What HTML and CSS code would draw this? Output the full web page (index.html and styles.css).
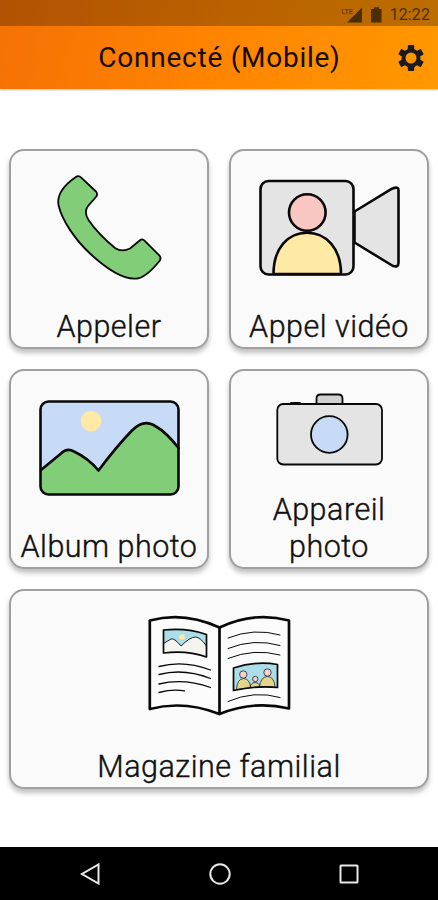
FILE: index.html
```html
<!DOCTYPE html>
<html lang="fr">
<head>
<meta charset="utf-8">
<title>Connecté (Mobile)</title>
<link rel="stylesheet" href="styles.css">
</head>
<body>
<div class="phone">
  <header class="header">
    <div class="status">
      <svg class="status-icons" viewBox="340 4 46 20"><text class="lte" x="341.5" y="13">LTE</text><path d="M347 21.5 362 6.500V21.500Z"/><path d="M374 6.200h5v1.800h2.500v13.500h-10.500V8h3Z"/></svg>
      <span class="clock">12:22</span>
    </div>
    <div class="toolbar">
      <h1 class="title">Connecté (Mobile)</h1>
      <svg class="gear" viewBox="-14 -14 28 28">
        <g class="teeth"><rect x="-3.200" y="-13" width="6.400" height="26" rx="1"/><rect x="-3.200" y="-13" width="6.400" height="26" rx="1" transform="rotate(60)"/><rect x="-3.200" y="-13" width="6.400" height="26" rx="1" transform="rotate(120)"/></g>
        <circle class="gear-body" r="7.500"/>
      </svg>
    </div>
  </header>

  <main class="grid">
    <button class="card">
      <svg class="art" viewBox="10 165 199 130">
        <path class="green line" d="M75.500 177.200Q78.500 175 81.200 177.600L96 191.500Q98.200 194.200 96 197L88 206Q83.500 212 88.500 220Q98 234 115 248Q122 252.500 130 248.500L140 240.300Q142.300 238.300 144.500 240.600L159.300 255.300Q161.600 258 159.500 261C153 269 145 277 138 278.300C126 280.500 109 271 90 253.500C76 240.500 62 221 58.500 205C56.500 193 65 184.500 75.500 177.200Z"/>
      </svg>
      <span class="label">Appeler</span>
    </button>

    <button class="card">
      <svg class="art" viewBox="230 165 199 130">
        <path class="grey bold" d="M354.500 211.500 392 188.700Q398.500 186 398.500 190V263Q398.500 267.500 393 266L354.500 242.500Z"/>
        <rect class="grey bold" x="260.500" y="181" width="93" height="93.500" rx="8"/>
        <path class="yellow bold" d="M273.500 274C273.500 248 288 232.700 307 232.700S341 248 341 274Z"/>
        <circle class="pink bold" cx="307.300" cy="212.500" r="18.300"/>
      </svg>
      <span class="label">Appel vidéo</span>
    </button>

    <button class="card">
      <svg class="art" viewBox="10 385 199 130">
        <rect class="blue" x="40.500" y="401.500" width="138" height="93" rx="8"/>
        <circle class="yellow" cx="91" cy="421" r="10.300"/>
        <path class="green" d="M41 470 61 453Q67 448 74 451.500Q88 458 98.500 470.500Q116 447 132 430.500Q144 419 156 426Q166 432 178.500 448V486.500Q178.500 494.500 170.500 494.500H48.500Q40.500 494.500 41 486Z"/>
        <path class="bold hollow" d="M41 470 61 453.500Q67 447.500 74 451.500Q88 458 98.500 470.500Q116 447 132 430.500Q144 418 156 426.500Q166 432 178.500 448"/>
        <rect class="bold hollow" x="40.500" y="401.500" width="138" height="93" rx="8"/>
      </svg>
      <span class="label">Album photo</span>
    </button>

    <button class="card">
      <svg class="art art-short" viewBox="230 385 199 95">
        <path class="line" d="M291 403h9"/>
        <path class="dark-grey line" d="M316.500 404V398.500Q316.500 394.500 320.500 394.500H338.500Q342.500 394.500 342.500 398.500V404Z"/>
        <rect class="grey line" x="277.300" y="404" width="104.700" height="60.500" rx="6"/>
        <circle class="blue line" cx="329.300" cy="434.500" r="18.300"/>
      </svg>
      <span class="label">Appareil<br>photo</span>
    </button>

    <button class="card card-wide">
      <svg class="art" viewBox="120 605 199 130">
        <path class="paper book" d="M149.800 620.500Q184 611 219.500 627.500Q254 611 289 620.500V708.500Q254 700 219.500 714Q184 700 149.800 709Z"/>
        <path class="book" d="M219.500 627.500V714"/>
        <path class="sky" d="M163.500 630Q187 627.500 206.500 634.500V657Q187 650 163.500 653Z"/>
        <circle class="yellow" cx="182" cy="637" r="2.800"/>
        <path class="snow" d="M163.500 643.500 171 639Q174 637.500 181 646Q190 637 195.500 637Q200 637 206.500 646V657Q187 650 163.500 653Z"/>
        <path class="thin" d="M163.500 643.500 171 639Q174 637.500 181 646Q190 637 195.500 637Q200 637 206.500 646"/>
        <path class="frame" d="M163.500 630Q187 627.500 206.500 634.500V657Q187 650 163.500 653Z"/>
        <path class="text-line" d="M159 666.500Q184 660 210.500 670M159 674.500Q184 668 210.500 678.500M159 684Q184 678 210.500 687.500M159 692.500Q172 689 184.500 690.800"/>
        <path class="text-line light" d="M228 638Q254 627.500 280 635M228 648.500Q254 638 280 645.500M228 658.500Q254 648 280 655M228 701.500Q254 690 280 697.500"/>
        <path class="sky" d="M233.500 668Q256 660.500 277.500 664.500V687.500Q256 685.500 233.500 690.500Z"/>
        <g class="people">
          <path d="M236.500 689.500Q237 679 243.500 678.500Q250 679 250.500 687.500ZM250 687.300Q251 682.500 255.200 682.500Q259 682.500 260 686.800ZM259.500 686.800Q260.500 677 267.500 676.500Q274.500 677 275 687Z"/>
          <circle cx="243.300" cy="674.500" r="3.700"/><circle cx="255.300" cy="679" r="2.700"/><circle cx="267.500" cy="672.500" r="3.700"/>
        </g>
        <path class="frame" d="M233.500 668Q256 660.500 277.500 664.500V687.500Q256 685.500 233.500 690.500Z"/>
      </svg>
      <span class="label">Magazine familial</span>
    </button>
  </main>

  <nav class="nav">
    <svg viewBox="0 0 24 24"><path d="M19.500 2.500V21.500L3 12Z"/></svg>
    <svg viewBox="0 0 24 24"><circle cx="12" cy="12" r="9.700"/></svg>
    <svg viewBox="0 0 24 24"><rect x="3.500" y="3.500" width="17" height="17" rx=".5"/></svg>
  </nav>
</div>
</body>
</html>
```
FILE: styles.css
```css
* { box-sizing: border-box; }
body { margin: 0; background: #fff; font-family: Roboto, sans-serif; }
.phone { width: 438px; height: 900px; display: flex; flex-direction: column; }
.header {
  height: 89px;
  background: linear-gradient(100deg, #f57105 0%, #ff8500 50%, #ff9800 100%);
  box-shadow: 0 1px 2px rgba(0, 0, 0, .25);
}
.status {
  height: 26px;
  padding: 3px 8px 0 0;
  display: flex;
  justify-content: flex-end;
  align-items: center;
  background: rgba(0, 0, 0, .27);
  color: #4c2d00;
}
.status-icons { width: 46px; height: 20px; fill: #4c2d00; margin-right: 4px; }
.lte { font: 700 7px Roboto, sans-serif; fill: #6e4000; }
.clock { font-size: 16px; line-height: 20px; letter-spacing: .1px; }
.toolbar {
  height: 63px;
  padding-right: 13px;
  display: grid;
  grid-template-columns: 42px 1fr 28px;
  align-items: center;
}
.title {
  grid-column: 2;
  margin: 0;
  text-align: center;
  font-size: 28px;
  font-weight: 400;
  line-height: 36px;
  letter-spacing: .75px;
  color: #150b00;
}
.gear { width: 28px; height: 28px; }
.teeth { fill: #1b1b1b; }
.gear-body { fill: #ff9500; stroke: #1b1b1b; stroke-width: 4px; }

.grid {
  height: 758px;
  padding: 60px 9px 0;
  display: grid;
  grid-template-columns: 200px 200px;
  grid-auto-rows: 200px;
  align-content: start;
  gap: 20px;
}
.card {
  margin: 0;
  padding: 14px 0 2px;
  display: flex;
  flex-direction: column;
  justify-content: space-between;
  align-items: center;
  border: 2px solid #a0a0a0;
  border-radius: 15px;
  background: #fafafa;
  box-shadow: 0 4px 5px rgba(0, 0, 0, .25);
  font-family: inherit;
}
.card-wide { grid-column: span 2; }
.label {
  font-size: 30.5px;
  font-weight: 300;
  line-height: 37px;
  letter-spacing: .5px;
  -webkit-text-stroke: .4px;
  text-align: center;
  white-space: nowrap;
  color: #111;
}
.art { width: 199px; height: 130px; flex: none; }
.art-short { height: 95px; }
.line, .bold, .book, .frame, .thin, .text-line { stroke: #080808; stroke-linejoin: round; stroke-linecap: round; }
.line { stroke-width: 1.800px; }
.bold { stroke-width: 2.600px; }
.hollow, .book, .frame, .thin, .text-line { fill: none; }
.green { fill: #82cd78; }
.grey { fill: #e4e4e4; }
.dark-grey { fill: #d0d0d0; }
.yellow { fill: #ffeaa5; }
.pink { fill: #f8c7c2; }
.blue { fill: #c7daf6; }
.book { stroke-width: 2.700px; }
.book.paper { fill: #fcfcfc; }
.sky { fill: #acdeea; }
.snow { fill: #f5f5f0; }
.frame { stroke-width: 1.700px; }
.thin { stroke-width: .9px; }
.text-line { stroke-width: 1.300px; }
.text-line.light { stroke-width: 1px; }
.people { stroke: #222; stroke-width: .8px; }
.people path { fill: #e5d58b; }
.people circle { fill: #f5d1ce; }

.nav {
  height: 53px;
  padding: 0 24px 0 26px;
  display: grid;
  grid-template-columns: repeat(3, 1fr);
  place-items: center;
  background: #000;
}
.nav svg { width: 24px; height: 24px; fill: none; stroke: #e8e8e8; stroke-width: 2px; }
```
